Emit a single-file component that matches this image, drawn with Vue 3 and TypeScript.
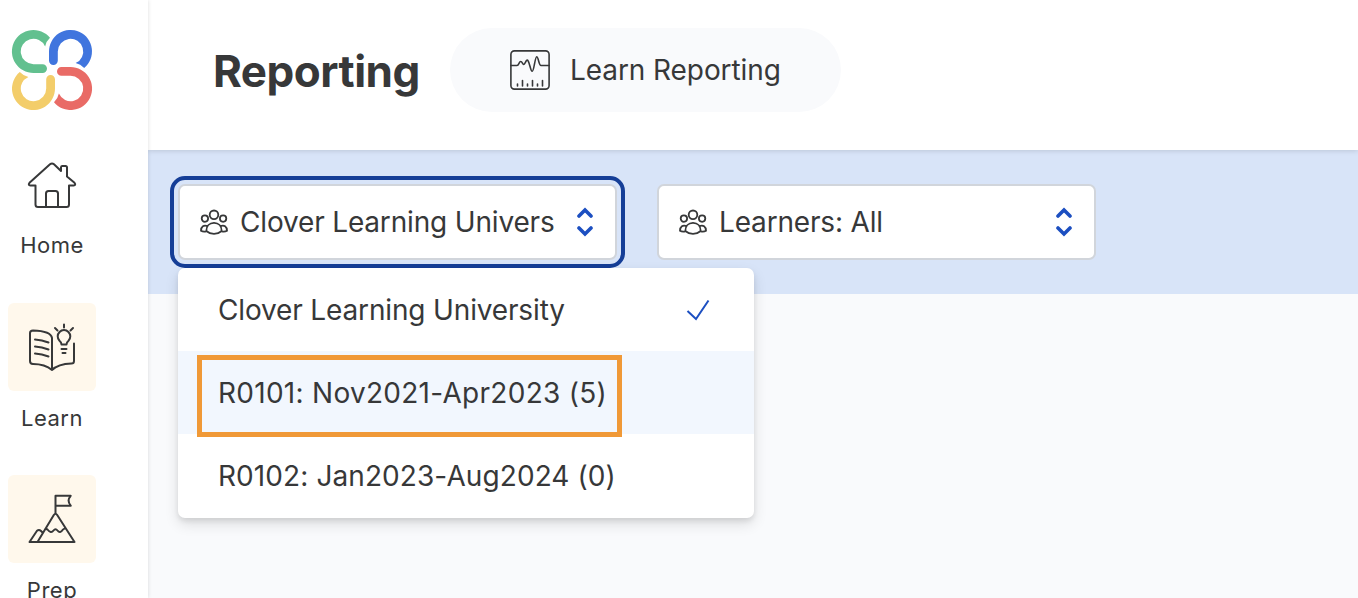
<script setup lang="ts">
interface Option {
  label: string
  tracking: string
  selected?: boolean
  active?: boolean
}

const filters = [
  { label: 'Clover Learning Univers', focused: true },
  { label: 'Learners: All', focused: false },
]

const options: Option[] = [
  { label: 'Clover Learning University', tracking: 'text', selected: true },
  { label: 'R0101: Nov2021-Apr2023 (5)', tracking: 'wide', active: true },
  { label: 'R0102: Jan2023-Aug2024 (0)', tracking: 'medium' },
]

const petal =
  'M-2-32.2A21.5 21.5 0 1 0-18.5 3H-9.4A4.4 4.4 0 0 0-9.4-5.8H-18.5A12.7 12.7 0 1 1-6.9-23.6Q-6-28.500-2-32.200Z'
const petals = [
  { color: '#62c08f', angle: 0 },
  { color: '#4075de', angle: 90 },
  { color: '#e96b66', angle: 180 },
  { color: '#f3cd6a', angle: 270 },
]
</script>

<template>
  <div class="app">
    <aside class="sidebar">
      <svg class="logo" viewBox="-40 -40 80 80">
        <path v-for="p in petals" :key="p.angle" :d="petal" :fill="p.color" :transform="`rotate(${p.angle})`" />
      </svg>
      <nav class="nav">
        <a class="nav-item">
          <span class="tile plain">
            <svg class="nav-icon" viewBox="0 0 88 88">
              <path d="M27.5 43.5V62.5Q27.5 65 30 65H58.5Q61 65 61 62.5V43.5H65.5Q68.300 43 66.5 40.8L59 34.5V25.5Q59 24 57.5 24H54Q53 24 53 25.5V29L46 22.300Q44 20.600 42 22.300L21.5 40.800Q19.700 43 22.500 43.500ZM38 65V51.500Q38 49 40.500 49H47.500Q50 49 50 51.500V65" />
            </svg>
          </span>
          <span class="nav-label">Home</span>
        </a>
        <a class="nav-item">
          <span class="tile">
            <svg class="nav-icon learn" viewBox="0 0 88 88">
              <path d="M44 66V34Q43 27 25 26.500Q22 26.500 22 29V57Q22 60 25 60Q37 60 44 66Q50 60 63.500 59.500Q66 59.500 66 57V39.500M27 35.500Q34 36 40.500 38.500M27 42.500Q34 43 40.500 45.500M27 49.500Q34 50 40.500 52.500" />
              <path d="M53.500 40.500Q53.500 38.500 51.500 36.800A6.300 6.300 0 1 1 60.500 36.800Q58.500 38.500 58.500 40.500ZM53.500 45H58.500M54.500 49H57.500M56 20.500V23.500M47 24L49.500 26.500M65 24L62.500 26.500" />
            </svg>
          </span>
          <span class="nav-label">Learn</span>
        </a>
        <a class="nav-item">
          <span class="tile">
            <svg class="nav-icon" viewBox="0 0 88 88">
              <path d="M29.500 67L45.800 40Q47.500 37.500 49.200 40L66.500 67H21.500L29 55.800Q31 54 33 56L35 58M47.500 38V20.800H62.700Q58.500 25.500 62.700 30.700H47.500M37.500 53.500L39.500 54.500Q43 59 45.500 55.500Q47.500 53 49.500 55.500Q52 59 55 54.500L57.500 53" />
            </svg>
          </span>
          <span class="nav-label">Prep</span>
        </a>
      </nav>
    </aside>

    <div class="content">
      <header class="header">
        <h1 class="title">Reporting</h1>
        <button class="tab">
          <svg class="chart-icon" viewBox="0 0 40 40">
            <rect x=".9" y=".9" width="38.2" height="38.2" rx="3.5" />
            <path d="M1 15.500H7C9 15.500 9 11.500 10.700 11.500S12.500 14.800 13.800 14.500S16.500 8.500 17.900 10.500C19.800 13 20.500 21.300 22.200 21.300C24 21.300 25 6.700 26.700 6.700C28.500 6.700 28.700 15.500 31 15.500H39M7.500 36V34M12.500 36V30.500M17.500 36V34M22.500 36V30.500M27.500 36V34M32.500 36V30.500" />
          </svg>
          <span class="tab-label">Learn Reporting</span>
        </button>
      </header>

      <section class="filters">
        <div v-for="f in filters" :key="f.label" class="select" :class="{ focused: f.focused }">
          <svg class="people" viewBox="0 0 28 26">
            <circle cx="14" cy="5.800" r="4.300" />
            <circle cx="4.900" cy="9.600" r="3.200" />
            <circle cx="23.100" cy="9.600" r="3.200" />
            <path d="M6.300 22C6.300 17 9.500 13.800 14 13.800S21.700 17 21.700 22Q18.500 24.800 14 24.800T6.300 22ZM8 17.200Q1.300 15 1 21.800Q3 23 6.300 22.400M20 17.200Q26.700 15 27 21.800Q25 23 21.700 22.400" />
          </svg>
          <span class="select-label">{{ f.label }}</span>
          <svg class="updown" viewBox="0 0 16 30">
            <path d="M2 9L8 3L14 9M2 21L8 27L14 21" />
          </svg>

          <ul v-if="f.focused" class="menu">
            <li v-for="o in options" :key="o.label" class="option" :class="[o.tracking, { active: o.active }]">
              <span>{{ o.label }}</span>
              <svg v-if="o.selected" class="check" viewBox="0 0 24 22">
                <path d="M1.500 12L10 20L22.500 1.500" />
              </svg>
              <span v-if="o.active" class="highlight"></span>
            </li>
          </ul>
        </div>
      </section>
    </div>
  </div>
</template>

<style>
body {
  margin: 0;
  overflow: hidden;
}
</style>

<style scoped>
* {
  box-sizing: border-box;
}
.app {
  display: flex;
  width: 100%;
  height: 598px;
  overflow: hidden;
  background: #f9fafc;
  color: #373839;
  font-family: Inter, 'Liberation Sans', sans-serif;
}
.sidebar {
  flex: none;
  width: 148px;
  height: 100%;
  padding: 30px 0 0 8px;
  background: #fff;
  box-shadow: 0 0 4px rgba(0, 0, 0, 0.14);
  position: relative;
  z-index: 1;
}
.logo {
  display: block;
  width: 80px;
  height: 80px;
  margin-left: 4px;
  overflow: visible;
}
.nav {
  width: 88px;
  margin-top: 20px;
}
.nav-item {
  display: flex;
  flex-direction: column;
  height: 172px;
}
.nav-item:first-child {
  height: 173px;
}
.tile {
  width: 88px;
  height: 88px;
  background: #fff8ec;
  border-radius: 6px;
}
.tile.plain {
  height: 98px;
  padding-top: 12px;
  background: none;
}
.nav-icon {
  display: block;
  width: 88px;
  height: 88px;
  fill: none;
  stroke: #373839;
  stroke-width: 2;
  stroke-linecap: round;
  stroke-linejoin: round;
}
.nav-icon.learn {
  height: 89px;
  padding-top: 1px;
}
.nav-label {
  margin-top: 13px;
  font-size: 22px;
  line-height: 28px;
  letter-spacing: 0.5px;
  text-align: center;
}
.plain + .nav-label {
  margin-top: 3px;
}
.content {
  flex: 1;
  min-width: 0;
}
.header {
  display: flex;
  align-items: center;
  height: 150px;
  padding: 0 0 10px 65px;
  background: #fff;
  box-shadow: 0 1px 5px rgba(0, 0, 0, 0.13);
  position: relative;
}
.title {
  width: 237px;
  margin: 1px 0 0;
  font-size: 44px;
  font-weight: 700;
  line-height: 56px;
  letter-spacing: -0.5px;
  white-space: nowrap;
}
.tab {
  display: flex;
  align-items: center;
  width: 391px;
  height: 84px;
  padding: 0 0 0 60px;
  border: 0;
  border-radius: 42px;
  background: #f9fafc;
  color: inherit;
  font: inherit;
}
.chart-icon {
  width: 40px;
  height: 40px;
  margin-right: 20px;
  fill: none;
  stroke: #373839;
  stroke-width: 1.6;
  stroke-linecap: round;
}
.tab-label,
.select-label,
.option {
  font-size: 28px;
  line-height: 40px;
  letter-spacing: -0.08px;
  white-space: nowrap;
}
.select-label {
  letter-spacing: -0.17px;
}
.option.text {
  letter-spacing: -0.15px;
}
.option.wide {
  letter-spacing: 0.28px;
}
.option.medium {
  letter-spacing: 0.09px;
}
.filters {
  display: flex;
  gap: 40px;
  height: 144px;
  padding: 34px 0 0 30px;
  background: #d8e4f8;
}
.select {
  position: relative;
  display: flex;
  align-items: center;
  width: 439px;
  height: 76px;
  padding: 0 22px 0 20px;
  background: #fff;
  border: 2px solid #d1d5db;
  border-radius: 7px;
}
.select.focused {
  outline: 4px solid #153e97;
  outline-offset: 4px;
}
.people {
  flex: none;
  width: 28px;
  height: 26px;
  margin-right: 12px;
  fill: none;
  stroke: #373839;
  stroke-width: 1.8;
}
.select-label {
  flex: 1;
}
.updown {
  flex: none;
  width: 16px;
  height: 30px;
  fill: none;
  stroke: #1c4fc1;
  stroke-width: 3.6;
  stroke-linecap: round;
  stroke-linejoin: miter;
}
.menu {
  position: absolute;
  z-index: 2;
  top: 82px;
  left: -2px;
  width: 576px;
  height: 250px;
  margin: 0;
  padding: 0;
  list-style: none;
  background: #fff;
  border-radius: 7px;
  box-shadow: 0 6px 14px rgba(0, 0, 0, 0.12), 0 3px 5px rgba(0, 0, 0, 0.08);
}
.option {
  position: relative;
  display: flex;
  align-items: center;
  justify-content: space-between;
  height: 83px;
  padding: 0 44px 0 40px;
}
.option.active {
  background: #f2f7fe;
}
.check {
  width: 24px;
  height: 22px;
  fill: none;
  stroke: #1c4fc1;
  stroke-width: 2;
}
.highlight {
  position: absolute;
  top: 4px;
  left: 19px;
  width: 425px;
  height: 82px;
  border: 5px solid #f09937;
  z-index: 1;
}
</style>
